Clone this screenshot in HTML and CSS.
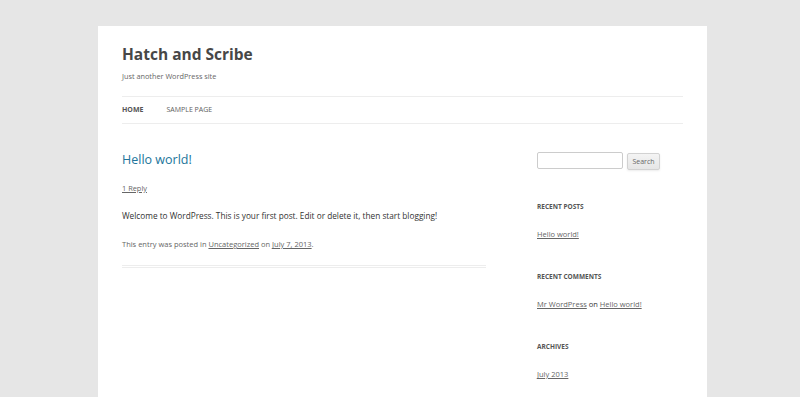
FILE: index.html
```html
<!DOCTYPE html>
<html lang="en">
<head>
<meta charset="utf-8">
<title>Hatch and Scribe | Just another WordPress site</title>
<link rel="stylesheet" href="styles.css">
</head>
<body>
<div class="site">
  <header class="site-header">
    <h1 class="site-title"><a href="#">Hatch and Scribe</a></h1>
    <h2 class="site-description">Just another WordPress site</h2>
    <nav class="main-nav">
      <ul class="menu">
        <li class="current"><a href="#">Home</a></li>
        <li><a href="#">Sample Page</a></li>
      </ul>
    </nav>
  </header>
  <div class="main">
    <div class="content">
      <article class="post">
        <h1 class="entry-title"><a href="#">Hello world!</a></h1>
        <div class="comments-link"><a href="#">1 Reply</a></div>
        <div class="entry-content">
          <p>Welcome to WordPress. This is your first post. Edit or delete it, then start blogging!</p>
        </div>
        <footer class="entry-meta">This entry was posted in <a href="#">Uncategorized</a> on <a href="#">July 7, 2013</a>.</footer>
      </article>
    </div>
    <aside class="sidebar">
      <form class="search-form">
        <input class="search-input" type="text" aria-label="Search for">
        <button class="search-btn" type="button">Search</button>
      </form>
      <section class="widget">
        <h3 class="widget-title">Recent Posts</h3>
        <ul class="widget-list"><li><a href="#">Hello world!</a></li></ul>
      </section>
      <section class="widget">
        <h3 class="widget-title">Recent Comments</h3>
        <ul class="widget-list"><li><a href="#">Mr WordPress</a> on <a href="#">Hello world!</a></li></ul>
      </section>
      <section class="widget">
        <h3 class="widget-title">Archives</h3>
        <ul class="widget-list"><li><a href="#">July 2013</a></li></ul>
      </section>
    </aside>
  </div>
</div>
</body>
</html>
```

FILE: styles.css
```css
html, body {
  margin: 0;
  padding: 0;
}
body {
  background: #e6e6e6;
  font-family: "Open Sans", "Liberation Sans", sans-serif;
  color: #333;
  height: 397px;
  overflow: hidden;
}
a { color: inherit; }
ul { list-style: none; margin: 0; padding: 0; }
h1, h2, h3, p { margin: 0; }

.site {
  width: 561px;
  padding: 0 24px;
  margin: 26px 0 0 98px;
  background: #fff;
  height: 371px;
}

.site-header {
  padding-top: 18px;
}
.site-title {
  font-size: 15.5px;
  line-height: 20px;
  font-weight: 700;
}
.site-title a {
  color: #474747;
  text-decoration: none;
}
.site-description {
  margin-top: 6px;
  font-size: 7.3px;
  line-height: 12px;
  font-weight: 400;
  color: #666;
}
.main-nav {
  margin-top: 14px;
  border-top: 1px solid #ededed;
  border-bottom: 1px solid #ededed;
}
.menu {
  display: flex;
  gap: 23px;
  height: 26px;
  align-items: center;
}
.menu li {
  font-size: 7px;
  line-height: 12px;
}
.menu a {
  text-transform: uppercase;
  text-decoration: none;
  color: #5e5e5e;
}
.menu .current a {
  color: #555;
  font-weight: 700;
}

.main {
  display: grid;
  grid-template-columns: 364px 146px;
  column-gap: 51px;
  padding-top: 25px;
}

.entry-title {
  margin-top: 1px;
  font-size: 12.5px;
  line-height: 20px;
  font-weight: 400;
}
.entry-title a {
  color: #21759b;
  text-decoration: none;
}
.comments-link {
  margin-top: 12px;
  font-size: 7.4px;
  line-height: 12px;
}
.comments-link a { color: #666; }
.entry-content {
  margin-top: 15px;
  font-size: 8.25px;
  line-height: 14px;
  color: #333;
}
.entry-meta {
  margin-top: 15px;
  padding-bottom: 15px;
  border-bottom: 3px double #ededed;
  font-size: 7.5px;
  line-height: 12px;
  color: #666;
}
.entry-meta a { color: #666; }

.search-form {
  display: flex;
  gap: 4px;
  margin-top: 3px;
  align-items: flex-start;
}
.search-input {
  box-sizing: border-box;
  width: 86px;
  height: 17px;
  margin: 0;
  border: 1px solid #ccc;
  border-radius: 2px;
  background: #fff;
}
.search-btn {
  box-sizing: border-box;
  margin: 1px 0 0;
  width: 33px;
  height: 17px;
  padding: 0;
  font-family: inherit;
  font-size: 7px;
  color: #666;
  border: 1px solid #d2d2d2;
  border-radius: 2px;
  background: linear-gradient(#f4f4f4, #e6e6e6);
  box-shadow: 0 1px 2px rgba(64,64,64,0.1);
}

.widget { margin-top: 32px; }
.widget + .widget { margin-top: 32px; }
.widget-title {
  font-size: 6.5px;
  line-height: 10px;
  font-weight: 700;
  text-transform: uppercase;
  color: #555;
}
.widget-list {
  margin-top: 16px;
  font-size: 7.5px;
  line-height: 12px;
  color: #333;
}
.widget-list a { color: #666; }
```
